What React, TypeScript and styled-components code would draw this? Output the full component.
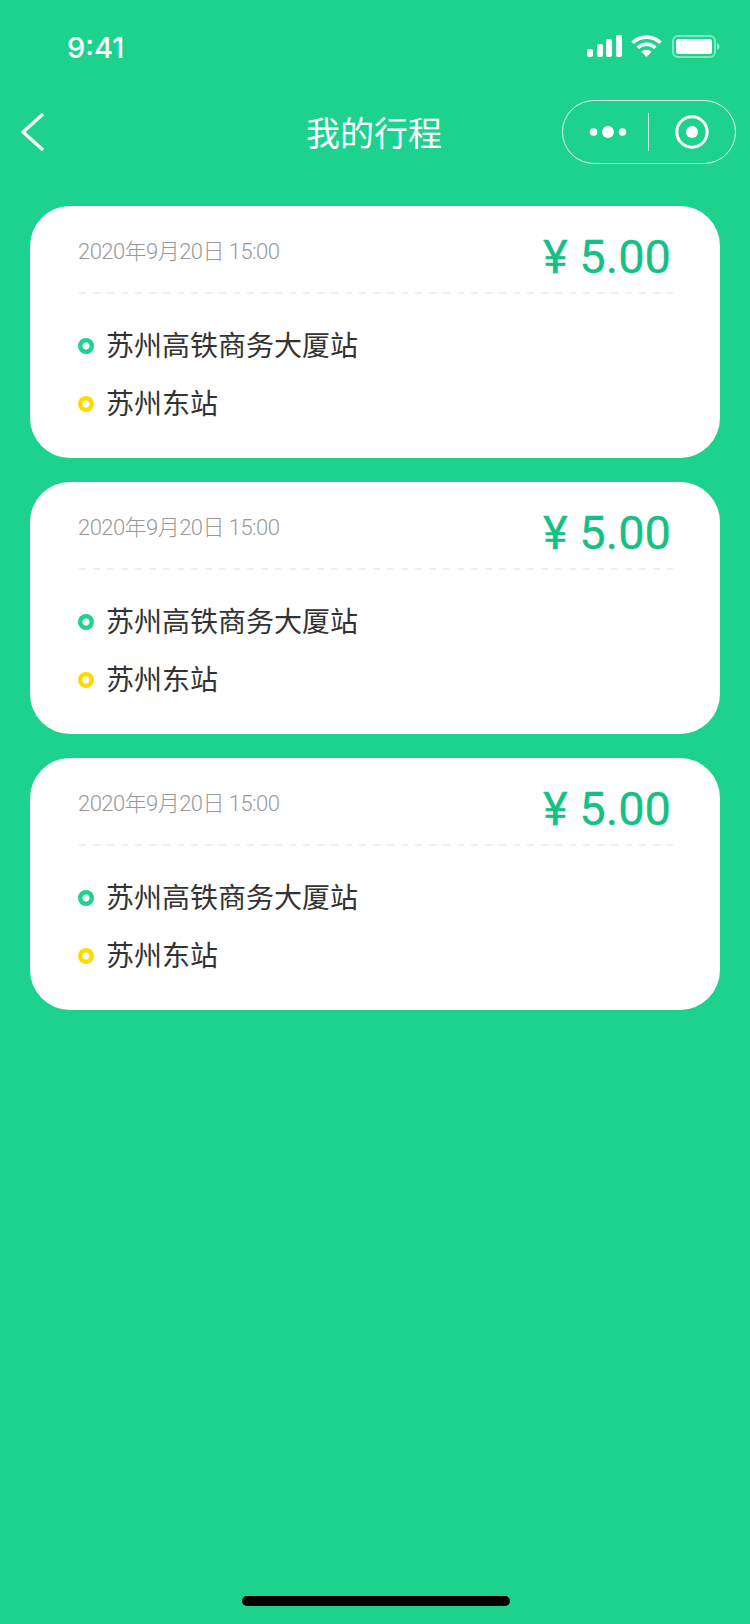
import React from "react";
import styled, { createGlobalStyle } from "styled-components";

const CJK = `"Noto Sans CJK SC", sans-serif`;
const LATIN = `Roboto, "Noto Sans CJK SC", sans-serif`;

const Global = createGlobalStyle`
  html, body { margin: 0; padding: 0; background: #1cd28d; }
  #root { width: 750px; }
  * { box-sizing: border-box; }
`;

const Page = styled.div`
  width: 750px;
  height: 1624px;
  background: #1cd28d;
  display: flex;
  flex-direction: column;
  font-family: ${CJK};
`;

const StatusBar = styled.div`
  height: 96px;
  padding: 0 29px 0 67px;
  display: flex;
  align-items: center;
  justify-content: space-between;
  color: #fff;
`;

const Clock = styled.div`
  font-family: Inter, sans-serif;
  font-size: 29px;
  font-weight: 500;
  line-height: 36px;
`;

const StatusIcons = styled.div`
  display: flex;
  align-items: center;
  gap: 9px;
  margin-bottom: 4px;
`;

const NavBar = styled.div`
  height: 72px;
  padding: 0 14px;
  display: grid;
  grid-template-columns: 1fr auto 1fr;
  align-items: center;
`;

const Back = styled.div`
  display: flex;
  align-items: center;
  padding-left: 6px;
`;

const Title = styled.h1`
  margin: 0 2px 0 0;
  color: #fff;
  font-size: 34px;
  font-weight: 400;
  line-height: 48px;
`;

const Capsule = styled.div`
  justify-self: end;
  width: 174px;
  height: 64px;
  border: 1px solid rgba(255, 255, 255, 0.85);
  border-radius: 32px;
  display: flex;
  align-items: center;
`;

const MorePart = styled.div`
  flex: 0 0 85px;
  padding-left: 4px;
  display: flex;
  align-items: center;
  justify-content: center;
`;

const TargetPart = styled.div`
  flex: 1;
  display: flex;
  align-items: center;
  justify-content: center;
`;

const CapsuleDivider = styled.div`
  width: 1px;
  height: 38px;
  background: rgba(255, 255, 255, 0.8);
`;

const List = styled.div`
  padding: 38px 30px 0;
  display: flex;
  flex-direction: column;
  gap: 24px;
`;

const Card = styled.div`
  height: 252px;
  background: #fff;
  border-radius: 40px;
  padding: 0 47px 0 48px;
  display: flex;
  flex-direction: column;
`;

const CardHead = styled.div`
  height: 86px;
  padding: 0 2px 0 0;
  display: flex;
  justify-content: space-between;
  align-items: flex-start;
`;

const Dashes = styled.div`
  height: 2px;
  margin-left: 1px;
  background: repeating-linear-gradient(90deg, #eeeeee 0 7px, transparent 7px 14px);
`;

const DateText = styled.div`
  margin-top: 31px;
  font-family: ${LATIN};
  font-size: 22px;
  font-weight: 300;
  line-height: 30px;
  letter-spacing: -0.55px;
  color: #999;
`;

const Price = styled.div`
  margin-top: 23px;
  font-family: ${LATIN};
  font-size: 47px;
  font-weight: 400;
  line-height: 56px;
  color: #14c083;
  -webkit-text-stroke: 0.3px #14c083;
`;

const Stops = styled.div`
  padding-top: 29px;
  display: flex;
  flex-direction: column;
  gap: 16px;
`;

const Stop = styled.div`
  height: 42px;
  display: flex;
  align-items: center;
  gap: 12px;
  font-size: 28px;
  line-height: 42px;
  color: #333;
`;

const Dot = styled.span<{ $color: string }>`
  width: 16px;
  height: 16px;
  margin-top: 4px;
  border-radius: 50%;
  background: radial-gradient(circle, #fff 3.2px, ${(p) => p.$color} 3.9px);
  flex: none;
`;

const Spacer = styled.div`
  flex: 1;
`;

const HomeBar = styled.div`
  width: 268px;
  height: 10px;
  border-radius: 5px;
  background: #000;
  margin: 0 0 18px 242px;
`;

const Signal = () => (
  <svg width="35" height="22" viewBox="0 0 35 22" fill="#fff">
    <rect x="0" y="14" width="6" height="8" rx="2" />
    <rect x="10" y="9" width="6" height="13" rx="2" />
    <rect x="19" y="4" width="6" height="18" rx="2" />
    <rect x="29" y="0" width="6" height="22" rx="2" />
  </svg>
);

const Wifi = () => (
  <svg width="32" height="22" viewBox="0 0 32 22" fill="none" stroke="#fff">
    <path d="M1.500 7.800C9.400 .2 21.600 .2 29.500 7.800" strokeWidth="3.600" />
    <path d="M6.600 12.800C11.600 8 19.400 8 24.400 12.800" strokeWidth="3.600" />
    <path d="M10.400 16.800L15.500 22L20.600 16.800C17.600 14 13.400 14 10.400 16.800Z" fill="#fff" stroke="none" />
  </svg>
);

const Battery = () => (
  <svg width="49" height="23" viewBox="0 0 49 23" fill="none">
    <rect x="1" y="1" width="42" height="21" rx="5" stroke="#fff" strokeOpacity=".45" strokeWidth="2" />
    <rect x="4" y="4" width="36" height="15" rx="2.500" fill="#fff" />
    <path d="M45 8c1.600.5 2.600 2 2.600 3.500S46.600 14.500 45 15z" fill="#fff" fillOpacity=".5" />
  </svg>
);

const BackIcon = () => (
  <svg width="26" height="42" viewBox="0 0 26 42" fill="none" stroke="#fff" strokeWidth="3.200">
    <path d="M23 3L3 21L23 39" />
  </svg>
);

const MoreIcon = () => (
  <svg width="38" height="14" viewBox="0 0 38 14" fill="#fff">
    <circle cx="4.500" cy="7" r="3.800" />
    <circle cx="19" cy="7" r="6" />
    <circle cx="33.500" cy="7" r="3.800" />
  </svg>
);

const TargetIcon = () => (
  <svg width="34" height="34" viewBox="0 0 34 34" fill="none">
    <circle cx="17" cy="17" r="15.200" stroke="#fff" strokeWidth="3" />
    <circle cx="17" cy="17" r="6" fill="#fff" />
  </svg>
);

const trips = [0, 1, 2];

export default function App() {
  return (
    <Page>
      <Global />
      <StatusBar>
        <Clock>9:41</Clock>
        <StatusIcons>
          <Signal />
          <Wifi />
          <Battery />
        </StatusIcons>
      </StatusBar>
      <NavBar>
        <Back>
          <BackIcon />
        </Back>
        <Title>我的行程</Title>
        <Capsule>
          <MorePart>
            <MoreIcon />
          </MorePart>
          <CapsuleDivider />
          <TargetPart>
            <TargetIcon />
          </TargetPart>
        </Capsule>
      </NavBar>
      <List>
        {trips.map((t) => (
          <Card key={t}>
            <CardHead>
              <DateText>2020年9月20日 15:00</DateText>
              <Price>¥ 5.00</Price>
            </CardHead>
            <Dashes />
            <Stops>
              <Stop>
                <Dot $color="#1cd28d" />
                苏州高铁商务大厦站
              </Stop>
              <Stop>
                <Dot $color="#fbdc00" />
                苏州东站
              </Stop>
            </Stops>
          </Card>
        ))}
      </List>
      <Spacer />
      <HomeBar />
    </Page>
  );
}
